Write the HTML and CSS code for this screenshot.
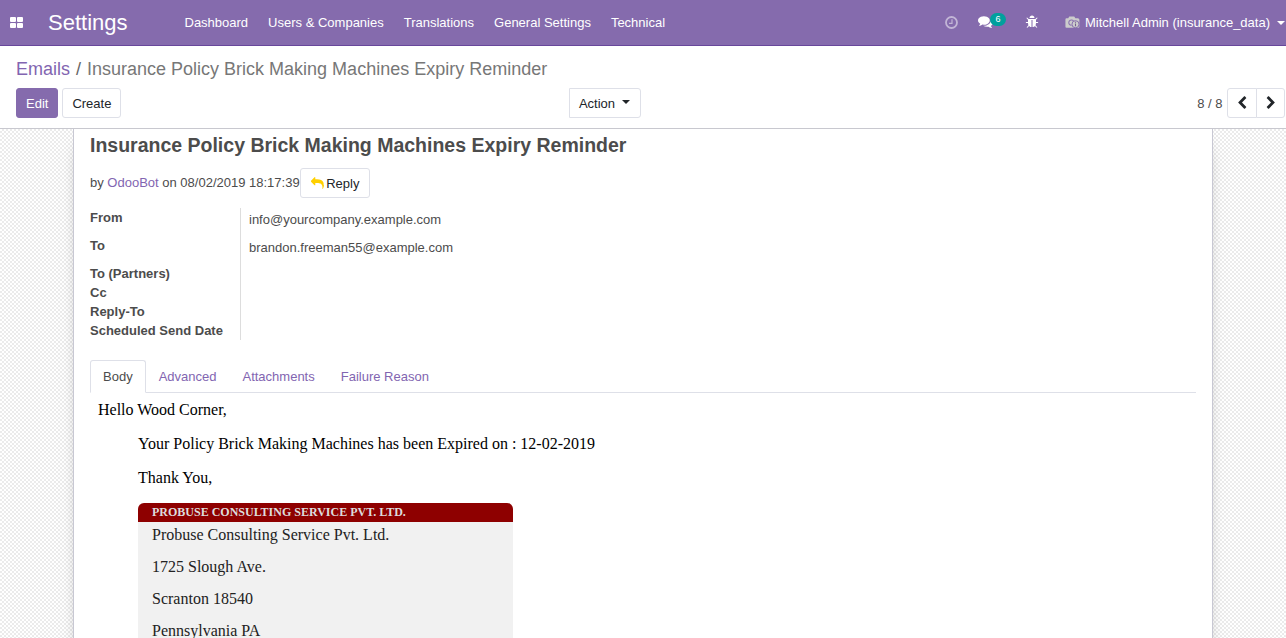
FILE: index.html
```html
<!DOCTYPE html>
<html lang="en">
<head>
<meta charset="utf-8">
<title>Settings</title>
<link rel="stylesheet" href="styles.css">
</head>
<body>
<header class="navbar">
  <svg class="apps" viewBox="0 0 13 11"><rect width="6" height="5" rx="1"/><rect x="7" width="6" height="5" rx="1"/><rect y="6" width="6" height="5" rx="1"/><rect x="7" y="6" width="6" height="5" rx="1"/></svg>
  <span class="brand">Settings</span>
  <nav class="menu"><a>Dashboard</a><a>Users &amp; Companies</a><a>Translations</a><a>General Settings</a><a>Technical</a></nav>
  <div class="systray">
    <svg class="clock" viewBox="0 0 13 13"><circle cx="6.5" cy="6.5" r="5.5" fill="none" stroke="currentColor" stroke-width="1.8"/><path d="M7 3.3v4H4" fill="none" stroke="currentColor" stroke-width="1.2"/></svg>
    <div class="messages">
      <svg class="comments" viewBox="0 0 1792 1792"><path d="M1408 768q0 139-94 257t-256.5 186.5-353.5 68.5q-86 0-176-16-124 88-278 128-36 9-86 16h-3q-11 0-20.5-8t-11.5-21q-1-3-1-6.5t.5-6.5 2-6l2.5-5 3.5-5.5 4-5 4.5-5 4-4.5q5-6 23-25t26-29.5 22.5-29 25-38.5 20.5-44q-124-72-195-177t-71-224q0-139 94-257t256.5-186.5 353.5-68.5 353.5 68.5 256.5 186.5 94 257zm384 256q0 120-71 224.5t-195 176.5q10 24 20.5 44t25 38.5 22.5 29 26 29.5 23 25q1 1 4 4.5t4.5 5 4 5 3.5 5.5l2.5 5 2 6 .5 6.5-1 6.5q-3 14-13 22t-22 7q-50-7-86-16-154-40-278-128-90 16-176 16-271 0-472-132 58 4 88 4 161 0 309-45t264-129q125-92 192-212t67-254q0-77-23-152 129 71 204 178t75 230z"/></svg>
      <span class="count">6</span>
    </div>
    <svg class="bug" viewBox="0 0 1792 1792"><path d="M1696 960q0 26-19 45t-45 19h-224q0 171-67 290l208 209q19 19 19 45t-19 45q-18 19-45 19t-45-19l-198-197q-5 5-15 13t-42 28.5-65 36.5-82 29-97 13v-896h-128v896q-51 0-101.5-13.5t-87-33-66-39-43.5-32.5l-15-14-183 207q-20 21-48 21-24 0-43-16-19-18-20.5-44.5t15.5-46.5l202-227q-58-114-58-274h-224q-26 0-45-19t-19-45 19-45 45-19h224v-294l-173-173q-19-19-19-45t19-45 45-19 45 19l173 173h844l173-173q19-19 45-19t45 19 19 45-19 45l-173 173v294h224q26 0 45 19t19 45zm-480-576h-640q0-133 93.5-226.5t226.5-93.5 226.5 93.5 93.5 226.5z"/></svg>
    <svg class="camera" viewBox="0 0 14 12"><path fill="#ccc" d="M1.5 2H3l1-1.6h4.6L9.7 2H12q1.4 0 1.4 1.4V10q0 .9-1 .9H1.4q-1 0-1-.9V3.2Q.4 2 1.5 2z"/><path fill="none" stroke="#8b73b2" d="M6.2 8.6A2.5 2.5 0 1 1 8 4.6"/><circle cx="9.8" cy="7.6" r="3.3" fill="#ccc" stroke="#856bad" stroke-width=".9"/><path d="M9.8 5.4v.9M9.8 7v2.4" fill="none" stroke="#75608f"/></svg>
    <span class="user">Mitchell Admin (insurance_data)</span>
    <i class="caret"></i>
  </div>
</header>
<section class="control">
  <div class="crumbs"><a>Emails</a><span class="slash">/</span><span class="current">Insurance Policy Brick Making Machines Expiry Reminder</span></div>
  <div class="actions">
    <div class="left"><button class="btn primary">Edit</button><button class="btn">Create</button></div>
    <button class="btn action">Action<i class="caret"></i></button>
    <div class="pager"><span>8 / 8</span><div class="pages">
      <button class="btn"><svg viewBox="0 0 1792 1792"><path d="M1427 301l-531 531 531 531q19 19 19 45t-19 45l-166 166q-19 19-45 19t-45-19l-742-742q-19-19-19-45t19-45l742-742q19-19 45-19t45 19l166 166q19 19 19 45t-19 45z"/></svg></button>
      <button class="btn"><svg class="flip" viewBox="0 0 1792 1792"><path d="M1427 301l-531 531 531 531q19 19 19 45t-19 45l-166 166q-19 19-45 19t-45-19l-742-742q-19-19-19-45t19-45l742-742q19-19 45-19t45 19l166 166q19 19 19 45t-19 45z"/></svg></button>
    </div></div>
  </div>
</section>
<main class="content">
  <article class="sheet">
    <h2>Insurance Policy Brick Making Machines Expiry Reminder</h2>
    <div class="byline"><span>by <a>OdooBot</a> on 08/02/2019 18:17:39</span><button class="btn reply"><svg viewBox="0 0 1792 1792"><path d="M1792 1120q0 166-127 451-3 7-10.5 24t-13.5 30-13 22q-12 17-28 17-15 0-23.5-10t-8.5-25q0-9 2.5-26.5t2.5-23.5q5-68 5-123 0-112-19.5-200.5t-54-153.5-89-112-117-78-142.5-49-161-24-177-7h-224v256q0 26-19 45t-45 19-45-19l-512-512q-19-19-19-45t19-45l512-512q19-19 45-19t45 19 19 45v256h224q713 0 875 403 53 134 53 333z"/></svg>Reply</button></div>
    <dl class="fields">
      <div class="tall"><dt>From</dt><dd>info@yourcompany.example.com</dd></div>
      <div class="tall"><dt>To</dt><dd>brandon.freeman55@example.com</dd></div>
      <div><dt>To (Partners)</dt><dd></dd></div>
      <div><dt>Cc</dt><dd></dd></div>
      <div><dt>Reply-To</dt><dd></dd></div>
      <div><dt>Scheduled Send Date</dt><dd></dd></div>
    </dl>
    <div class="tabs"><a class="active">Body</a><a>Advanced</a><a>Attachments</a><a>Failure Reason</a></div>
    <div class="mail">
      <p>Hello Wood Corner,</p>
      <div class="indent">
        <p>Your Policy Brick Making Machines has been Expired on : 12-02-2019</p>
        <p>Thank You,</p>
        <div class="company">
          <h3>PROBUSE CONSULTING SERVICE PVT. LTD.</h3>
          <div class="address"><p>Probuse Consulting Service Pvt. Ltd.</p><p>1725 Slough Ave.</p><p>Scranton 18540</p><p>Pennsylvania PA</p></div>
        </div>
      </div>
    </div>
  </article>
</main>
</body>
</html>
```
FILE: styles.css
```css
* { box-sizing: border-box; }
body { margin: 0; height: 638px; overflow: hidden; display: flex; flex-direction: column; font: 13px/19px "Liberation Sans", Arial, sans-serif; color: #4c4c4c; background: #fff; }
p, h2, h3, dl, dd { margin: 0; }
a { color: #8265b1; }
svg { display: block; fill: currentColor; flex: none; }
.navbar { flex: none; height: 46px; display: flex; align-items: center; background: #856bad; border-bottom: 1px solid #68479b; color: #fff; padding-left: 10px; white-space: nowrap; }
.navbar a { color: #fff; }
.apps { width: 13px; height: 11px; margin-top: -1px; }
.brand { font-size: 22px; line-height: 44px; margin-left: 25px; width: 136.5px; }
.menu { display: flex; gap: 20px; }
.systray { margin-left: auto; display: flex; align-items: center; }
.clock { width: 13px; height: 13px; opacity: .5; margin-right: 20px; margin-top: -1px; }
.messages { display: flex; width: 29px; margin-right: 18px; }
.comments { width: 15px; height: 15px; margin-top: -2px; }
.count { height: 13px; margin: -3px 0 0 -3px; width: 16px; text-align: center; border-radius: 7px; background: #00a09d; font-size: 9px; line-height: 13px; }
.bug { width: 14px; height: 14px; margin-right: 26px; margin-top: -1px; }
.camera { width: 15px; height: 13px; margin-right: 5px; margin-top: -1px; }
.caret { display: block; border: 4px solid transparent; border-top-color: currentColor; border-bottom: 0; }
.navbar .caret { margin-left: 7px; margin-right: 1px; }
.control { flex: none; height: 83px; padding: 11px 1px 0 16px; border-bottom: 1px solid #c8c8cf; display: flex; flex-direction: column; gap: 7px; }
.crumbs { font-size: 18px; line-height: 24px; display: flex; }
.crumbs .slash { padding: 0 6px; color: #666; }
.crumbs .current { color: #777; }
.actions { display: grid; grid-template-columns: 553px auto 1fr; align-items: center; }
.left { display: flex; gap: 4px; }
.btn { font: inherit; height: 30px; padding: 0 9px; border: 1px solid #dee0e8; border-radius: 3px; background: #fff; color: #212529; display: flex; align-items: center; justify-content: center; }
.btn.primary { background: #856bad; border-color: #856bad; color: #fff; }
.action { width: 72px; gap: 7px; border-radius: 0 3px 3px 0; }
.action .caret { margin-top: -3px; margin-right: 1px; }
.pager { display: flex; justify-content: flex-end; align-items: center; gap: 4.5px; }
.pages { display: flex; }
.pages .btn { width: 29px; padding: 0; border-radius: 0 3px 3px 0; }
.pages .btn:first-child { width: 30px; border-radius: 3px 0 0 3px; margin-right: -1px; }
.pages svg { width: 14px; height: 14px; }
.flip { transform: scaleX(-1); }
.content { flex: 1; min-height: 0; overflow: hidden; padding: 0 73px; background: conic-gradient(#ebebeb 25%, #fff 0 50%, #ebebeb 0 75%, #fff 0) 0 0 / 4px 4px; }
.sheet { height: 600px; background: #fff; border: solid #c8c8d3; border-width: 0 1px; box-shadow: 0 5px 20px -15px #000; padding: 4px 16px 0; }
.sheet h2 { font-size: 19.5px; line-height: 24px; }
.byline { display: flex; align-items: center; margin-top: 11px; height: 30px; }
.byline > span { margin-top: -1px; }
.reply { gap: 2.5px; padding: 0 0 0 10px; width: 70px; justify-content: flex-start; }
.reply svg { width: 13px; height: 13px; color: #ffd000; }
.fields { margin-top: 10px; display: flex; flex-direction: column; }
.fields > div { display: flex; height: 19px; }
.fields > .tall { height: 28px; }
.fields dt { width: 150px; font-weight: 700; }
.fields dd { border-left: 1px solid #ddd; padding: 2px 0 0 8px; }
.tabs { display: flex; margin-top: 20px; height: 33px; border-bottom: 1px solid #dee0e8; }
.tabs a { height: 33px; padding: 6px 12px; border: 1px solid transparent; }
.tabs .active { color: #4c4c4c; border-color: #dee0e8; border-bottom-color: #fff; border-radius: 3px 3px 0 0; }
.mail { padding: 8px 8px 0; color: #000; font: 16px/18px "Liberation Serif", "Times New Roman", serif; }
.indent { margin: 16px 0 0 40px; display: flex; flex-direction: column; gap: 16px; }
.company { width: 375px; border-radius: 6px 6px 0 0; overflow: hidden; background: #f1f1f1; }
.company h3 { font-size: 12px; line-height: 19px; padding-left: 14px; background: #8e0000; color: #ddd; }
.address { color: #222; padding: 4px 14px; display: flex; flex-direction: column; gap: 14px; }
```
